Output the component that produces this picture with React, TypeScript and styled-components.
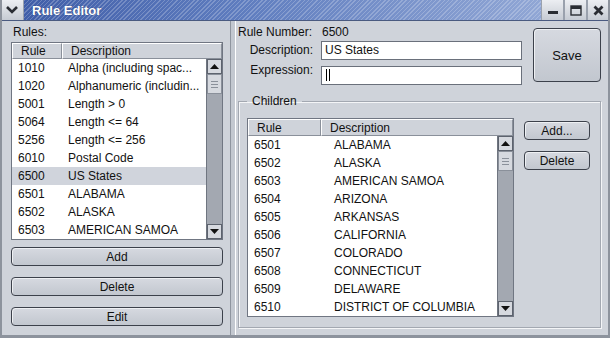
import styled, { createGlobalStyle } from 'styled-components'

const GlobalStyle = createGlobalStyle`
    html, body {
        margin: 0;
        padding: 0;
        background: #cfd3da;
    }
    body {
        font-family: "Liberation Sans", Arial, sans-serif;
        font-size: 12px;
        color: #111;
    }
`;

const Window = styled.div`
    width: 610px;
    height: 338px;
    box-sizing: border-box;
    display: flex;
    flex-direction: column;
    background: #cfd3da;
    border-left: 2px solid #8d939d;
    border-right: 2px solid #8d939d;
    border-bottom: 3px solid #8d939d;
    overflow: hidden;
`;

const TitleBar = styled.div`
    height: 20px;
    flex: none;
    display: flex;
    align-items: stretch;
    margin: 0 -2px;
    background:
        repeating-linear-gradient(135deg, rgba(255,255,255,0) 0 2px, rgba(255,255,255,0.22) 2px 3px),
        linear-gradient(90deg, #3d5ba6 0%, #5f7dbf 40%, #9cb0da 100%);
    border-bottom: 1px solid #4a5a80;
`;

const TitleButton = styled.div<{ $wide?: boolean }>`
    width: ${p => (p.$wide ? 22 : 21)}px;
    flex: none;
    display: flex;
    align-items: center;
    justify-content: center;
    background: linear-gradient(#eceef2, #c6cbd3);
    border-left: 1px solid #9aa1ad;
    border-right: 1px solid #9aa1ad;
`;

const Title = styled.div`
    flex: 1;
    display: flex;
    align-items: center;
    padding-left: 8px;
    color: #fff;
    font-weight: bold;
    font-size: 13px;
    text-shadow: 0 0 1px #1d2f66;
`;

const Body = styled.div`
    flex: 1;
    display: flex;
    min-height: 0;
`;

const LeftPane = styled.div`
    width: 212px;
    flex: none;
    padding: 3px 7px 0 9px;
    display: flex;
    flex-direction: column;
`;

const Divider = styled.div`
    width: 4px;
    flex: none;
    border-left: 1px solid #8f959f;
    border-right: 1px solid #ffffff;
    background: #c3c8d0;
`;

const Caption = styled.div`
    height: 16px;
    line-height: 16px;
    padding-left: 2px;
`;

const Table = styled.div<{ $rows: number; $head?: number }>`
    margin-top: 2px;
    border: 1px solid #707682;
    background: #fff;
    display: grid;
    grid-template-rows: ${p => p.$head ?? 16}px ${p => p.$rows * 18}px;
`;

const Header = styled.div<{ $first: number }>`
    display: grid;
    grid-template-columns: ${p => p.$first}px 1fr;
    background: #cfd3da;
`;

const HeaderCell = styled.div`
    border-top: 1px solid #fff;
    border-left: 1px solid #fff;
    border-right: 1px solid #8a909a;
    border-bottom: 1px solid #8a909a;
    padding-left: 8px;
    display: flex;
    align-items: center;
`;

const TableBody = styled.div`
    display: flex;
    min-height: 0;
`;

const Rows = styled.div`
    flex: 1;
    overflow: hidden;
`;

const Row = styled.div<{ $first: number; $selected?: boolean }>`
    height: 18px;
    display: grid;
    grid-template-columns: ${p => p.$first}px 1fr;
    align-items: center;
    background: ${p => (p.$selected ? '#d0d4dc' : '#fff')};
    white-space: nowrap;
`;

const Cell = styled.div<{ $pad?: number }>`
    padding-left: ${p => p.$pad ?? 6}px;
    overflow: hidden;
`;

const ScrollBar = styled.div`
    width: 15px;
    flex: none;
    display: flex;
    flex-direction: column;
    background: #a3a8b1;
    border-left: 1px solid #6f7580;
`;

const Arrow = styled.div`
    height: 15px;
    flex: none;
    display: flex;
    align-items: center;
    justify-content: center;
    background: #d6d9df;
    border: 1px solid #5d636e;
    box-sizing: border-box;
`;

const Thumb = styled.div`
    height: 20px;
    flex: none;
    box-sizing: border-box;
    background: #d6d9df;
    border: 1px solid #8a909a;
    display: flex;
    flex-direction: column;
    justify-content: center;
    align-items: center;
    gap: 2px;
`;

const Grip = styled.div`
    width: 7px;
    height: 1px;
    background: #8a909a;
`;

const Track = styled.div`
    flex: 1;
`;

const Buttons = styled.div`
    margin-top: 7px;
    display: flex;
    flex-direction: column;
    gap: 11px;
`;

const Button = styled.button<{ $h?: number; $fs?: number }>`
    height: ${p => p.$h ?? 19}px;
    padding: 0;
    font-family: inherit;
    font-size: ${p => p.$fs ?? 12}px;
    color: #111;
    border: 1px solid #3c414b;
    border-radius: 4px;
    background: linear-gradient(#d6d9e0, #c2c7cf);
    box-shadow: inset 1px 1px 0 #eef0f3;
`;

const RightPane = styled.div`
    flex: 1;
    padding: 2px 8px 0 2px;
    display: flex;
    flex-direction: column;
`;

const Top = styled.div`
    display: flex;
    gap: 11px;
`;

const Form = styled.div`
    display: grid;
    grid-template-columns: 75px 201px;
    column-gap: 8px;
    grid-template-rows: 17px 20px 25px;
    align-items: center;
`;

const Label = styled.div<{ $left?: boolean; $up?: number }>`
    text-align: ${p => (p.$left ? 'left' : 'right')};
    white-space: nowrap;
    align-self: ${p => (p.$up ? 'start' : 'center')};
    margin-top: ${p => p.$up ?? 0}px;
`;

const Value = styled.div`
    padding-left: 1px;
`;

const Input = styled.div`
    height: 19px;
    box-sizing: border-box;
    border: 1px solid #6a707b;
    background: #fff;
    padding-left: 3px;
    line-height: 17px;
    align-self: end;
`;

const Caret = styled.span`
    display: inline-block;
    width: 1px;
    height: 12px;
    margin-left: 1px;
    background: #000;
    box-shadow: 3px 0 0 #000;
    vertical-align: -2px;
`;

const SaveButton = styled(Button)`
    width: 68px;
    margin-top: 5px;
`;

const Group = styled.fieldset`
    margin: 9px 0 0 0;
    padding: 10px 8px 10px 8px;
    border: 1px solid #a3a8b1;
    box-shadow: inset 1px 1px 0 #f4f5f7, 1px 1px 0 #f4f5f7;
    display: flex;
    gap: 10px;
    min-width: 0;
`;

const Legend = styled.legend`
    padding: 0 5px;
    margin-left: 0;
`;

const SideButtons = styled.div`
    display: flex;
    flex-direction: column;
    gap: 11px;
    padding-top: 3px;
    width: 66px;
`;

const ChildTable = styled(Table)`
    margin-top: 0;
    width: 265px;
    flex: none;
`;

const rules = [
    ['1010', 'Alpha (including spac...'],
    ['1020', 'Alphanumeric (includin...'],
    ['5001', 'Length > 0'],
    ['5064', 'Length <= 64'],
    ['5256', 'Length <= 256'],
    ['6010', 'Postal Code'],
    ['6500', 'US States'],
    ['6501', 'ALABAMA'],
    ['6502', 'ALASKA'],
    ['6503', 'AMERICAN SAMOA'],
]

const children = [
    ['6501', 'ALABAMA'],
    ['6502', 'ALASKA'],
    ['6503', 'AMERICAN SAMOA'],
    ['6504', 'ARIZONA'],
    ['6505', 'ARKANSAS'],
    ['6506', 'CALIFORNIA'],
    ['6507', 'COLORADO'],
    ['6508', 'CONNECTICUT'],
    ['6509', 'DELAWARE'],
    ['6510', 'DISTRICT OF COLUMBIA'],
]

const Scroll = () => (
    <ScrollBar>
        <Arrow>
            <svg width="9" height="5" viewBox="0 0 9 5"><path d="M0 5 L4.5 0 L9 5 Z" fill="#111" /></svg>
        </Arrow>
        <Thumb>
            <Grip /><Grip /><Grip />
        </Thumb>
        <Track />
        <Arrow>
            <svg width="9" height="5" viewBox="0 0 9 5"><path d="M0 0 L9 0 L4.5 5 Z" fill="#111" /></svg>
        </Arrow>
    </ScrollBar>
)

type TableProps = {
    data: string[][]
    first: number
    head?: number
    descPad?: number
    selected?: string
    as?: typeof ChildTable
}

const RuleTable = ({ data, first, head, descPad, selected, as }: TableProps) => {
    const T = as ?? Table
    return (
        <T $rows={data.length} $head={head}>
            <Header $first={first}>
                <HeaderCell>Rule</HeaderCell>
                <HeaderCell>Description</HeaderCell>
            </Header>
            <TableBody>
                <Rows>
                    {data.map(([id, desc]) => (
                        <Row key={id} $first={first} $selected={id === selected}>
                            <Cell>{id}</Cell>
                            <Cell $pad={descPad}>{desc}</Cell>
                        </Row>
                    ))}
                </Rows>
                <Scroll />
            </TableBody>
        </T>
    )
}

const App = () => {
    return (
        <>
            <GlobalStyle />
            <Window>
                <TitleBar>
                    <TitleButton $wide>
                        <svg width="12" height="8" viewBox="0 0 12 8"><path d="M1 1 L6 6 L11 1" stroke="#2a2d33" strokeWidth="2.6" fill="none" /></svg>
                    </TitleButton>
                    <Title>Rule Editor</Title>
                    <TitleButton>
                        <svg width="10" height="10" viewBox="0 0 10 10"><rect x="0" y="6" width="10" height="3" fill="#2a2d33" /></svg>
                    </TitleButton>
                    <TitleButton>
                        <svg width="12" height="11" viewBox="0 0 12 11"><rect x="1" y="1" width="10" height="9" stroke="#2a2d33" strokeWidth="1.4" fill="none" /><rect x="1" y="1" width="10" height="3" fill="#2a2d33" /></svg>
                    </TitleButton>
                    <TitleButton>
                        <svg width="11" height="11" viewBox="0 0 11 11"><path d="M1.5 1.5 L9.5 9.5 M9.5 1.5 L1.5 9.5" stroke="#2a2d33" strokeWidth="2.8" /></svg>
                    </TitleButton>
                </TitleBar>
                <Body>
                    <LeftPane>
                        <Caption>Rules:</Caption>
                        <RuleTable data={rules} first={50} selected="6500" />
                        <Buttons>
                            <Button>Add</Button>
                            <Button>Delete</Button>
                            <Button>Edit</Button>
                        </Buttons>
                    </LeftPane>
                    <Divider />
                    <RightPane>
                        <Top>
                            <Form>
                                <Label $left>Rule Number:</Label>
                                <Value>6500</Value>
                                <Label>Description:</Label>
                                <Input>US States</Input>
                                <Label $up={3}>Expression:</Label>
                                <Input><Caret /></Input>
                            </Form>
                            <SaveButton $h={54} $fs={13}>Save</SaveButton>
                        </Top>
                        <Group>
                            <Legend>Children</Legend>
                            <RuleTable data={children} first={73} head={17} descPad={13} as={ChildTable} />
                            <SideButtons>
                                <Button>Add...</Button>
                                <Button>Delete</Button>
                            </SideButtons>
                        </Group>
                    </RightPane>
                </Body>
            </Window>
        </>
    )
}

export default App
